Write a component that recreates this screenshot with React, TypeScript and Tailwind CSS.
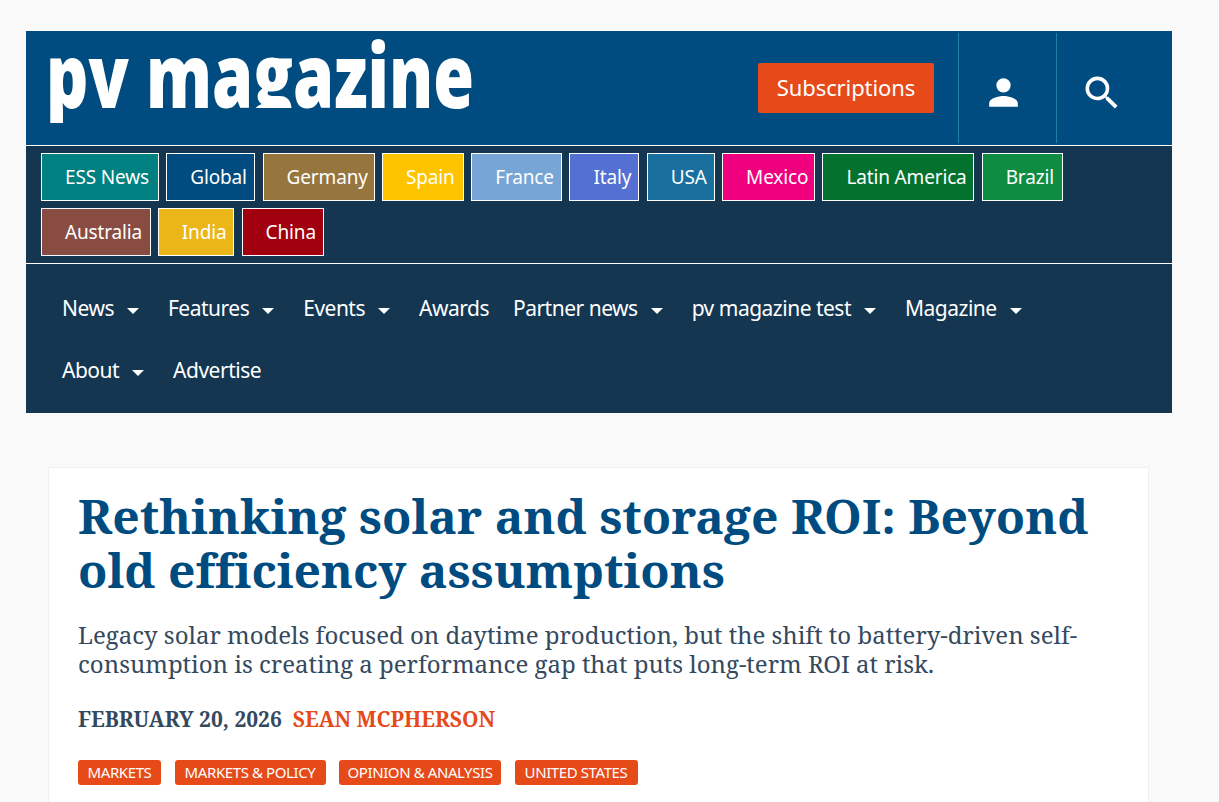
const tags: [string, string, string][] = [
  ["ESS News", "bg-[#008080]", "w-[118px]"],
  ["Global", "bg-[#004c80]", "w-[89px]"],
  ["Germany", "bg-[#96753e]", "w-[112px]"],
  ["Spain", "bg-[#fec400]", "w-[82px]"],
  ["France", "bg-[#76a5d6]", "w-[91px]"],
  ["Italy", "bg-[#5470d2]", "w-[70px]"],
  ["USA", "bg-[#19709f]", "w-[68px]"],
  ["Mexico", "bg-[#ef007f]", "w-[93px]"],
  ["Latin America", "bg-[#04722f]", "w-[152px]"],
  ["Brazil", "bg-[#0e8c41]", "w-[81px]"],
  ["Australia", "bg-[#894c42]", "w-[109.5px]"],
  ["India", "bg-[#eab618]", "w-[76.5px]"],
  ["China", "bg-[#a1000e]", "w-[82px]"],
];
const nav1: [string, boolean][] = [
  ["News", true], ["Features", true], ["Events", true], ["Awards", false],
  ["Partner news", true], ["pv magazine test", true], ["Magazine", true],
];
const nav2: [string, boolean][] = [["About", true], ["Advertise", false]];
const cats: [string, string][] = [
  ["MARKETS", "w-[83px]"],
  ["MARKETS & POLICY", "w-[151px]"],
  ["OPINION & ANALYSIS", "w-[162px]"],
  ["UNITED STATES", "w-[123px]"],
];
const sans = "font-['Noto_Sans','Open_Sans',sans-serif]";
const serif = "font-['Noto_Serif','DejaVu_Serif',serif] [font-variant-ligatures:none]";

function NavItem({ label, caret }: { label: string; caret: boolean }) {
  return (
    <a className="flex items-center h-[62px] px-3 text-[21px] tracking-[-0.5px] text-white">
      {label}
      {caret && <span className="ml-[13px] mr-[5px] mt-[3px] w-0 h-0 border-x-[6px] border-x-transparent border-t-[6px] border-t-white" />}
    </a>
  );
}

export default function App() {
  return (
    <div className={`min-h-[802px] h-[802px] overflow-hidden bg-[#f9f9f9] ${sans}`}>
      <div className="pt-[31px] pl-[26px] w-[1172px]">
        <header className="flex h-[114px] bg-[#004c80]">
          <div className="flex-1 min-w-0 pl-[20px]">
            <div className="-mt-[7px] text-white font-extrabold text-[88px] leading-[100px] whitespace-nowrap origin-left scale-x-[0.75] font-['Open_Sans',sans-serif]">
              <span className="inline-block [clip-path:inset(0_0_1%_0)]">p</span>v ma<span className="inline-block [clip-path:inset(0_0_16%_0)]">g</span>azine
            </div>
          </div>
          <div className="flex items-center pr-[24px]">
            <a className="flex items-center justify-center w-[176px] h-[50px] rounded-[2px] bg-[#e64a19] text-white text-[22px] tracking-[-0.1px] pb-[2px]">Subscriptions</a>
          </div>
          <div className="flex items-center justify-start pl-[23px] pt-[9px] w-[98px] my-[2px] border-l border-[#1f7fa3]">
            <svg width="43" height="43" viewBox="0 0 24 24" fill="#fff"><path d="M12 12a4 4 0 1 0 0-8 4 4 0 0 0 0 8zm0 2c-2.67 0-8 1.34-8 4v2h16v-2c0-2.66-5.33-4-8-4z" /></svg>
          </div>
          <div className="flex items-center justify-start pl-[23px] pt-[9px] w-[116px] my-[2px] border-l border-[#1f7fa3]">
            <svg width="44" height="44" viewBox="0 0 24 24" fill="#fff"><path d="M15.5 14h-.79l-.28-.27A6.47 6.47 0 0 0 16 9.5 6.5 6.5 0 1 0 9.5 16c1.61 0 3.09-.59 4.23-1.57l.27.28v.79l5 4.99L20.49 19l-4.99-5zm-6 0C7.01 14 5 11.99 5 9.5S7.01 5 9.5 5 14 7.01 14 9.5 11.99 14 9.5 14z" /></svg>
          </div>
        </header>
        <div className="bg-[#143651]">
          <div className="flex flex-wrap content-start gap-x-[7.3px] gap-y-[7px] border-y border-white h-[119px] pt-[7px] pl-[15px]">
            {tags.map(([t, bg, w]) => (
              <a key={t} className={`flex items-center justify-start h-[48px] pl-[23px] border border-white text-white text-[19px] tracking-[-0.15px] whitespace-nowrap ${bg} ${w}`}>{t}</a>
            ))}
          </div>
          <nav className="pl-6 pr-4 pt-[15px] h-[150px] -mt-[1px]">
            <div className="flex">
              {nav1.map(([l, c]) => <NavItem key={l} label={l} caret={c} />)}
            </div>
            <div className="flex">
              {nav2.map(([l, c]) => <NavItem key={l} label={l} caret={c} />)}
            </div>
          </nav>
        </div>
      </div>
      <main className="mt-[54px] ml-[48px] w-[1101px] bg-white border border-[#f0f0f0] px-[29px] pt-[21px] pb-10">
        <h1 className={`${serif} text-[#004c80] font-bold text-[48px] leading-[54px]`}>Rethinking solar and storage ROI: Beyond old efficiency assumptions</h1>
        <p className={`${serif} mt-[23px] text-[#34495e] text-[24px] leading-[29px]`}>Legacy solar models focused on daytime production, but the shift to battery-driven self-consumption is creating a performance gap that puts long-term ROI at risk.</p>
        <div className={`${serif} mt-[26px] flex gap-[11px] font-bold text-[21px] leading-[30px]`}>
          <span className="text-[#34495e]">FEBRUARY 20, 2026</span>
          <a className="text-[#e64a19]">SEAN MCPHERSON</a>
        </div>
        <div className="mt-[26px] flex gap-[13.5px]">
          {cats.map(([c, w]) => (
            <a key={c} className={`flex items-center justify-center h-[25px] rounded-[3px] bg-[#e64a19] text-white text-[15px] tracking-[-0.4px] whitespace-nowrap ${w}`}>{c}</a>
          ))}
        </div>
      </main>
    </div>
  );
}
